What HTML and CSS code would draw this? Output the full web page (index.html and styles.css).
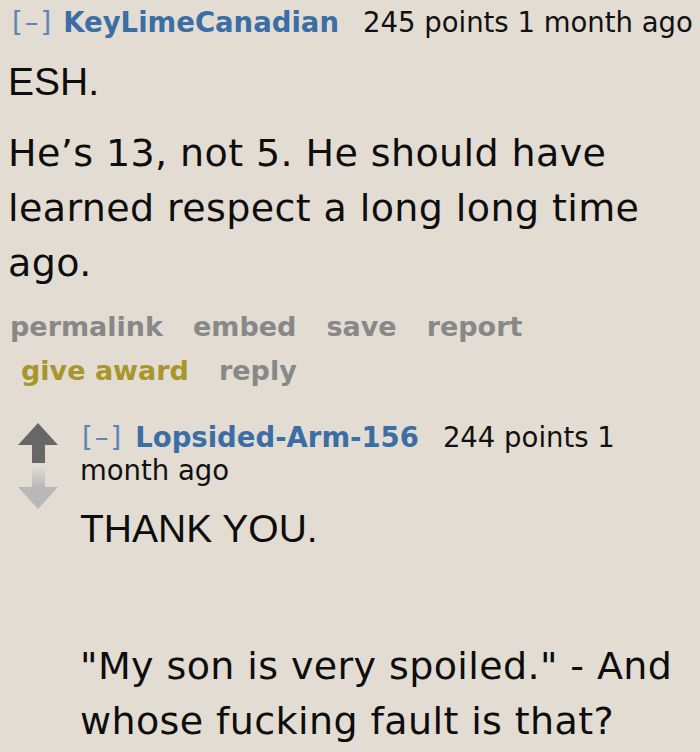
FILE: index.html
```html
<!DOCTYPE html>
<html>
<head>
<meta charset="utf-8">
<link rel="stylesheet" href="styles.css">
</head>
<body>
<div class="comment">
  <div class="tagline">
    <a class="expand">[–]</a><a class="author">KeyLimeCanadian</a><span class="score">245 points</span> <span class="time">1 month ago</span>
  </div>
  <div class="md">
    <p class="caps">ESH.</p>
    <p>He’s 13, not 5. He should have learned respect a long long time ago.</p>
  </div>
  <ul class="buttons">
    <li>permalink</li>
    <li>embed</li>
    <li>save</li>
    <li>report</li>
    <li class="award">give award</li>
    <li>reply</li>
  </ul>
  <div class="child">
    <div class="midcol">
      <div class="arrow up"></div>
      <div class="arrow down"></div>
    </div>
    <div class="entry">
      <div class="tagline">
        <a class="expand">[–]</a><a class="author">Lopsided-Arm-156</a><span class="score">244 points</span> <span class="time">1</span> <span class="time">month ago</span>
      </div>
      <div class="md">
        <p class="caps">THANK YOU.</p>
        <p class="blank">&nbsp;</p>
        <p>"My son is very spoiled." - And whose fucking fault is that?</p>
      </div>
    </div>
  </div>
</div>
</body>
</html>
```

FILE: styles.css
```css
html, body {
  margin: 0;
  padding: 0;
  background: #e3dcd2;
}
body {
  width: 700px;
  height: 752px;
  overflow: hidden;
}
.comment {
  padding: 0 0 0 8px;
}
.tagline {
  font-family: "DejaVu Sans", Verdana, sans-serif;
  font-size: 27.5px;
  line-height: 33px;
  color: #111;
  padding-top: 6px;
}
.expand {
  color: #5b86b5;
  letter-spacing: 2px;
  margin-left: 4px;
  margin-right: 10px;
}
.author {
  color: #3a6ea5;
  font-weight: bold;
  margin-right: 24px;
}
.md {
  font-family: "DejaVu Sans", Tahoma, sans-serif;
  font-size: 38px;
  letter-spacing: 0.4px;
  line-height: 55px;
  color: #0d0d0d;
}
.md p {
  margin: 0;
}
.md .caps {
  font-family: "Liberation Sans", Arial, sans-serif;
  font-size: 39px;
  letter-spacing: 0;
  line-height: 50px;
  margin: 18px 0 19px;
}
.buttons {
  list-style: none;
  margin: 14px 0 0;
  padding: 0 0 0 2px;
  display: flex;
  flex-wrap: wrap;
  font-family: "DejaVu Sans", Verdana, sans-serif;
  font-weight: bold;
  font-size: 27px;
  line-height: 44px;
  color: #888888;
}
.buttons li {
  padding: 0 19px 0 11px;
}
.buttons li:first-child {
  padding-left: 0;
}
.buttons .award {
  color: #a8952c;
}
.child {
  display: flex;
  margin-top: 12px;
  padding-left: 10px;
}
.midcol {
  width: 41px;
  flex: none;
  margin-right: 21px;
  padding-top: 18px;
  display: flex;
  flex-direction: column;
  gap: 3px;
}
.arrow {
  width: 41px;
  height: 41px;
  position: relative;
}
.arrow::before {
  content: "";
  position: absolute;
  left: 0;
  border-left: 20.5px solid transparent;
  border-right: 20.5px solid transparent;
}
.arrow::after {
  content: "";
  position: absolute;
  left: 14px;
  width: 13px;
}
.up::before {
  top: 0;
  border-bottom: 22px solid #676767;
}
.up::after {
  top: 22px;
  height: 18px;
  background: #676767;
}
.down::before {
  top: 20px;
  border-top: 22px solid #b8b8b8;
}
.down::after {
  top: 0;
  height: 20px;
  background: linear-gradient(#e0dad2, #b8b8b8);
}
.entry {
  flex: 1;
  min-width: 0;
}
.entry .tagline {
  padding-top: 16px;
}
.entry .expand {
  margin-left: 2px;
  margin-right: 12px;
}
.entry .md .caps {
  margin: 17px 0 0;
}
.blank {
  height: 85px;
}
```
